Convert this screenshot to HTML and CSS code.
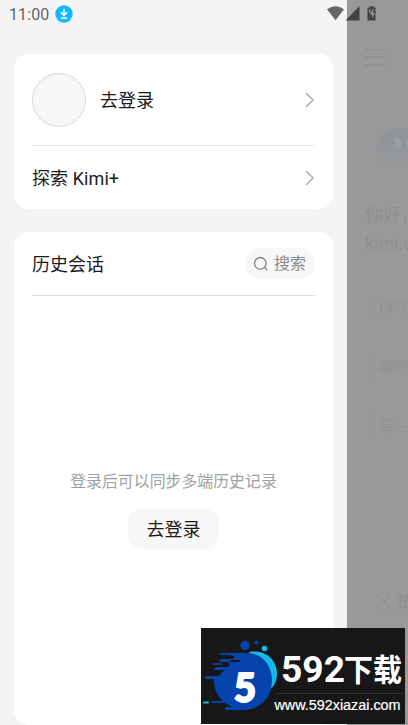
FILE: index.html
```html
<!DOCTYPE html>
<html lang="zh-CN">
<head>
<meta charset="utf-8">
<title>Kimi</title>
<link rel="stylesheet" href="styles.css">
</head>
<body>
<div class="screen">
  <aside class="drawer">
    <section class="card account">
      <div class="row profile">
        <span class="avatar"></span>
        <span class="label">去登录</span>
        <svg class="chevron" viewBox="0 0 10 16"><path d="M1 1l7 7-7 7"/></svg>
      </div>
      <div class="row explore">
        <span class="label">探索 Kimi+</span>
        <svg class="chevron" viewBox="0 0 10 16"><path d="M1 1l7 7-7 7"/></svg>
      </div>
    </section>
    <section class="card history">
      <header class="history-head">
        <h2>历史会话</h2>
        <div class="search">
          <svg viewBox="0 0 16 16"><circle cx="7.3" cy="7.3" r="5.8"/><path d="M11.4 11.4l2.8 2.8"/></svg>
          <span>搜索</span>
        </div>
      </header>
      <div class="empty">
        <p>登录后可以同步多端历史记录</p>
        <button class="login">去登录</button>
      </div>
    </section>
  </aside>
  <main class="chat">
    <svg class="menu" viewBox="0 0 20 18"><path d="M0 1.500h20M0 9h20M0 16.500h20"/></svg>
    <div class="mascot"><i></i><i></i></div>
    <div class="greeting">你好，<br>kimi.c</div>
    <div class="prompt">PPT</div>
    <div class="prompt">哪吒</div>
    <div class="prompt">写一</div>
    <div class="photo">
      <svg viewBox="0 0 14 14"><path d="M1 4V1h3M10 1h3v3M13 10v3h-3M4 13H1v-3M3.500 5h7M5.500 5v4.500M8.500 5v4.500h2"/></svg>
      <span>拍</span>
    </div>
  </main>
</div>
<div class="status">
  <span class="time">11:00</span>
  <svg class="download" viewBox="0 0 18 18"><circle cx="9" cy="9" r="8.700"/><path d="M9 4v6M6 7.400l3 3 3-3M6 13h6"/></svg>
  <svg class="signals" viewBox="0 0 52 16">
    <path class="wifi" d="M0 3.200Q8.500-2.600 17 3.200L8.500 14.300z"/>
    <path class="cell" d="M32.500 0v14.500H18.500z"/>
    <path class="battery" d="M40.500 1.500h2V.2h4v1.300h2v13h-8z"/>
    <path class="bolt" d="M42 3.500h1.500v3H42zM46 3l-3 5.500h2v4l2.800-5.600h-2l1-3.900z"/>
  </svg>
</div>
<svg class="watermark" viewBox="0 0 204 96">
  <rect class="plate" width="204" height="96"/>
  <path class="cyan" d="M48 24C65 21 76 32 76 46C76 56 70 63 61 66z"/>
  <path class="blue" d="M32 25H46C61 25 71 37 71 52C71 70 59 82 42 82H24Q22 80 26 79H32Q27 77 24 75H12Q9 74 12 73H22Q12 64 13 51H7Q3 50 5 48H18Q20 44 24 43H15Q11 41 16 39H26Q31 37 27 34H20Q16 32 21 31H32Q36 28 28 27H20Q17 25 21 25z"/>
  <path class="gap" d="M30 33h8M6 43h15M10 69h6"/>
  <path class="blue-line" d="M12 36h9M4 49.500h14"/>
  <path class="cyan-line" d="M3 74.500h4"/>
  <circle class="blue" cx="44" cy="17.500" r="4.700"/>
  <circle class="blue" cx="55.500" cy="14.500" r="2"/>
  <circle class="cyan" cx="63.500" cy="20.500" r="2.800"/>
  <text class="five" x="33" y="73.500" textLength="22" lengthAdjust="spacingAndGlyphs">5</text>
  <text class="digits" x="80" y="54" textLength="64" lengthAdjust="spacingAndGlyphs">592</text>
  <text class="brand" x="143" y="53" textLength="58" lengthAdjust="spacingAndGlyphs">下载</text>
  <path class="rule" d="M75 65.500h127"/>
  <text class="url" x="73.500" y="82" textLength="126" lengthAdjust="spacingAndGlyphs">www.592xiazai.com</text>
</svg>
</body>
</html>
```
FILE: styles.css
```css
* { box-sizing: border-box; }
body {
  margin: 0;
  width: 408px;
  height: 725px;
  overflow: hidden;
  position: relative;
  background: #f4f4f4;
  color: #1b1b1b;
  font: 18px/26px Roboto, "Noto Sans CJK SC", sans-serif;
}
svg { display: block; fill: none; flex: none; }
.screen { display: flex; height: 725px; }
.drawer {
  width: 347px;
  flex: none;
  padding: 54px 14px 0;
  display: flex;
  flex-direction: column;
  gap: 23px;
}
.card { background: #fff; border-radius: 15px; padding: 0 18px; }
.account { height: 155px; }
.row { display: flex; align-items: center; }
.label, .history-head h2 { padding-top: 2px; }
.profile { height: 92px; border-bottom: 1px solid #e8e8e8; }
.explore { height: 63px; }
.explore .label { letter-spacing: 0.080px; }
.avatar {
  width: 54px;
  height: 54px;
  margin-right: 14px;
  border: 1px solid #d8d8d8;
  border-radius: 50%;
  background: #f7f7f7;
}
.chevron { width: 10px; height: 16px; margin-left: auto; stroke: #b0b0b0; stroke-width: 1.5; }
.history { flex: 1; }
.history-head {
  height: 64px;
  display: flex;
  align-items: center;
  justify-content: space-between;
  border-bottom: 1px solid #dcdcdc;
}
h2 { margin: 0; font: inherit; }
.search {
  width: 70px;
  height: 31px;
  padding-left: 8px;
  display: flex;
  align-items: center;
  gap: 5px;
  border-radius: 16px;
  background: #f7f7f7;
  color: #8c8c8c;
  font-size: 16px;
}
.search svg { width: 16px; height: 16px; stroke: #858585; stroke-width: 1.3; }
.empty { padding-top: 173px; display: flex; flex-direction: column; align-items: center; }
.empty p { margin: 0 0 14px; color: #a0a0a0; font-size: 15.900px; white-space: nowrap; }
.login {
  width: 91px;
  height: 40px;
  padding: 1px 0 0;
  border: 0;
  border-radius: 14px;
  background: #f7f7f7;
  color: #1b1b1b;
  font: inherit;
}
.chat {
  width: 61px;
  padding: 48px 0 0 18px;
  overflow: hidden;
  white-space: nowrap;
  background: #999;
  color: #8f8f8f;
}
.menu { width: 21px; height: 19px; stroke: #909090; stroke-width: 1.8; }
.mascot {
  width: 44px;
  height: 44px;
  margin: 61px 0 0 11px;
  padding: 10px 0 0 19px;
  display: flex;
  gap: 5px;
  border-radius: 50%;
  background: linear-gradient(#8c939b, #999 95%);
}
.mascot i { width: 6px; height: 10px; flex: none; border-radius: 3px; background: #9d9d9d; }
.greeting { margin: 28px 0 35px; line-height: 29px; }
.prompt {
  height: 30px;
  margin: 0 0 29.300px 7px;
  padding-left: 6px;
  border-left: 1px solid #979797;
  color: #929292;
  font-size: 16px;
  line-height: 32px;
}
.photo { display: flex; align-items: center; gap: 7px; margin: 147px 0 0 11px; font-size: 16px; }
.photo svg { width: 14px; height: 14px; stroke: #8f8f8f; stroke-width: 1; }
.status {
  position: absolute;
  top: 0;
  left: 0;
  width: 408px;
  height: 28px;
  padding: 0 31px 0 9px;
  display: flex;
  align-items: center;
}
.time { padding-top: 1px; color: #646464; font-size: 16px; letter-spacing: 0.100px; }
.download { width: 18px; height: 18px; margin-left: 6px; }
.download circle { fill: #14b9fa; }
.download path { stroke: #fff; stroke-width: 1.5; }
.signals { width: 52px; height: 16px; margin-left: auto; margin-right: -2px; }
.wifi { fill: #666; }
.cell, .battery { fill: #424242; }
.bolt { fill: #999; }
.watermark { position: absolute; left: 201px; top: 628px; width: 204px; height: 96px; }
.plate { fill: #171717; }
.blue { fill: #0644ad; }
.cyan { fill: #14b9e8; }
.gap { stroke: #171717; stroke-width: 2; stroke-linecap: round; }
.blue-line { stroke: #0b48a0; stroke-width: 1.5; stroke-linecap: round; }
.cyan-line { stroke: #14b9e8; stroke-width: 2; stroke-linecap: round; }
.rule { stroke: #303030; }
.watermark text { fill: #fff; }
.watermark .five { font: 900 40px Lato, sans-serif; stroke: #fff; stroke-width: 2; }
.digits { font: 700 37px Roboto, sans-serif; }
.brand { font: 700 31px "Noto Sans CJK SC", sans-serif; }
.watermark .url { font: 14.500px "Liberation Sans", sans-serif; stroke: #fff; stroke-width: 0.200; }
```
